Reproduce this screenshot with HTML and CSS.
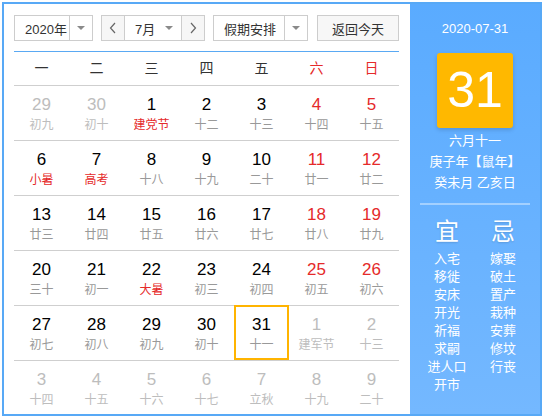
FILE: index.html
```html
<!DOCTYPE html>
<html lang="zh-CN">
<head>
<meta charset="utf-8">
<title>万年历</title>
<link rel="stylesheet" href="styles.css">
</head>
<body>
<div class="cal">
  <div class="main">
    <div class="toolbar">
      <div class="select year">
        <span class="sel-text">2020年</span>
        <span class="sel-arrow"><i class="tri"></i></span>
      </div>
      <div class="month-group">
        <span class="nav-btn"><svg width="8" height="12" viewBox="0 0 8 12"><polyline points="6,1 1.5,6 6,11" fill="none" stroke="#666" stroke-width="1.2"/></svg></span>
        <div class="month-sel">
          <span class="sel-text">7月</span>
          <i class="tri"></i>
        </div>
        <span class="nav-btn"><svg width="8" height="12" viewBox="0 0 8 12"><polyline points="2,1 6.5,6 2,11" fill="none" stroke="#666" stroke-width="1.2"/></svg></span>
      </div>
      <div class="select holiday">
        <span class="sel-text">假期安排</span>
        <span class="sel-arrow"><i class="tri"></i></span>
      </div>
      <button class="today-btn">返回今天</button>
    </div>
    <div class="grid">
      <div class="wk">一</div><div class="wk">二</div><div class="wk">三</div><div class="wk">四</div><div class="wk">五</div><div class="wk red">六</div><div class="wk red">日</div>

      <div class="day other"><b>29</b><s>初九</s></div>
      <div class="day other"><b>30</b><s>初十</s></div>
      <div class="day"><b>1</b><s class="fest">建党节</s></div>
      <div class="day"><b>2</b><s>十二</s></div>
      <div class="day"><b>3</b><s>十三</s></div>
      <div class="day wkend"><b>4</b><s>十四</s></div>
      <div class="day wkend"><b>5</b><s>十五</s></div>

      <div class="day"><b>6</b><s class="fest">小暑</s></div>
      <div class="day"><b>7</b><s class="fest">高考</s></div>
      <div class="day"><b>8</b><s>十八</s></div>
      <div class="day"><b>9</b><s>十九</s></div>
      <div class="day"><b>10</b><s>二十</s></div>
      <div class="day wkend"><b>11</b><s>廿一</s></div>
      <div class="day wkend"><b>12</b><s>廿二</s></div>

      <div class="day"><b>13</b><s>廿三</s></div>
      <div class="day"><b>14</b><s>廿四</s></div>
      <div class="day"><b>15</b><s>廿五</s></div>
      <div class="day"><b>16</b><s>廿六</s></div>
      <div class="day"><b>17</b><s>廿七</s></div>
      <div class="day wkend"><b>18</b><s>廿八</s></div>
      <div class="day wkend"><b>19</b><s>廿九</s></div>

      <div class="day"><b>20</b><s>三十</s></div>
      <div class="day"><b>21</b><s>初一</s></div>
      <div class="day"><b>22</b><s class="fest">大暑</s></div>
      <div class="day"><b>23</b><s>初三</s></div>
      <div class="day"><b>24</b><s>初四</s></div>
      <div class="day wkend"><b>25</b><s>初五</s></div>
      <div class="day wkend"><b>26</b><s>初六</s></div>

      <div class="day"><b>27</b><s>初七</s></div>
      <div class="day"><b>28</b><s>初八</s></div>
      <div class="day"><b>29</b><s>初九</s></div>
      <div class="day"><b>30</b><s>初十</s></div>
      <div class="day selected"><b>31</b><s>十一</s></div>
      <div class="day other"><b>1</b><s>建军节</s></div>
      <div class="day other"><b>2</b><s>十三</s></div>

      <div class="day other"><b>3</b><s>十四</s></div>
      <div class="day other"><b>4</b><s>十五</s></div>
      <div class="day other"><b>5</b><s>十六</s></div>
      <div class="day other"><b>6</b><s>十七</s></div>
      <div class="day other"><b>7</b><s>立秋</s></div>
      <div class="day other"><b>8</b><s>十九</s></div>
      <div class="day other"><b>9</b><s>二十</s></div>
    </div>
  </div>
  <aside class="side">
    <div class="side-date">2020-07-31</div>
    <div class="big-day">31</div>
    <div class="lunar">
      <div>六月十一</div>
      <div>庚子年【鼠年】</div>
      <div>癸未月 乙亥日</div>
    </div>
    <div class="divider"></div>
    <div class="yiji">
      <div class="col">
        <div class="yj-title">宜</div>
        <div>入宅</div><div>移徙</div><div>安床</div><div>开光</div><div>祈福</div><div>求嗣</div><div>进人口</div><div>开市</div>
      </div>
      <div class="col">
        <div class="yj-title">忌</div>
        <div>嫁娶</div><div>破土</div><div>置产</div><div>栽种</div><div>安葬</div><div>修坟</div><div>行丧</div>
      </div>
    </div>
  </aside>
</div>
</body>
</html>
```
FILE: styles.css
```css
* { box-sizing: border-box; }
html, body { margin: 0; padding: 0; background: #fff; }
body {
  font-family: "Liberation Sans", "Noto Sans CJK SC", sans-serif;
  color: #333;
}
.cal {
  margin: 2px;
  width: 540px;
  height: 414px;
  border: 2px solid #58a9f6;
  display: flex;
  overflow: hidden;
}
.main {
  width: 406px;
  padding: 11px 0 0 10px;
  flex: none;
}
.toolbar {
  width: 385px;
  height: 26px;
  display: flex;
  gap: 8px;
  font-size: 13px;
}
.select, .month-group {
  height: 26px;
  border: 1px solid #cdcdcd;
  display: flex;
  align-items: stretch;
  background: #fff;
}
.select.year { width: 79px; }
.select.holiday { width: 95px; }
.sel-text {
  flex: 1;
  display: flex;
  align-items: center;
  padding-left: 10px;
  color: #333;
}
.sel-arrow {
  width: 23px;
  border-left: 1px solid #cdcdcd;
  display: flex;
  align-items: center;
  justify-content: center;
}
.tri {
  display: block;
  width: 0;
  height: 0;
  border-left: 4px solid transparent;
  border-right: 4px solid transparent;
  border-top: 4px solid #8a8a8a;
}
.month-group { width: 104px; }
.nav-btn {
  width: 22px;
  background: #f6f6f6;
  display: flex;
  align-items: center;
  justify-content: center;
}
.month-sel {
  flex: 1;
  border-left: 1px solid #cdcdcd;
  border-right: 1px solid #cdcdcd;
  display: flex;
  align-items: center;
  padding-right: 8px;
}
.today-btn {
  margin-left: auto;
  width: 82px;
  height: 26px;
  border: 1px solid #cdcdcd;
  background: #f7f7f7;
  font: inherit;
  font-size: 13px;
  color: #333;
  padding: 0;
}
.grid {
  margin-top: 10px;
  width: 385px;
  border-top: 1px solid #5aa9f3;
  display: grid;
  grid-template-columns: repeat(7, 55px);
}
.wk {
  height: 33px;
  line-height: 33px;
  text-align: center;
  font-size: 14px;
  color: #333;
}
.wk.red { color: #e52a2a; }
.day {
  height: 55px;
  border-top: 1px solid #cfcfcf;
  padding-top: 8px;
  text-align: center;
}
.day b {
  display: block;
  font-weight: normal;
  font-size: 17px;
  line-height: 22px;
  color: #000;
}
.day s {
  display: block;
  text-decoration: none;
  font-size: 12px;
  line-height: 18px;
  color: #999;
}
.day s.fest { color: #e52a2a; }
.day.wkend b { color: #e52a2a; }
.day.other b, .day.other s { color: #bdbdbd; }
.day.selected {
  border: 2px solid #ffb400;
  padding-top: 7px;
}
.side {
  flex: 1;
  background: linear-gradient(#5aabff, #74b8ff);
  color: #fff;
  text-align: center;
}
.side-date {
  margin-top: 15px;
  font-size: 13px;
  line-height: 20px;
}
.big-day {
  width: 76px;
  height: 75px;
  margin: 14px auto 0;
  background: #ffb800;
  border-radius: 3px;
  box-shadow: 0 2px 4px rgba(0,0,0,0.15);
  font-size: 50px;
  line-height: 75px;
  color: #fff;
}
.lunar {
  margin-top: 2px;
  font-size: 13px;
  line-height: 21px;
}
.divider {
  margin: 10px 10px 0;
  height: 2px;
  background: rgba(255,255,255,0.4);
}
.yiji {
  display: grid;
  grid-template-columns: 56px 56px;
  justify-content: center;
  font-size: 13px;
  line-height: 18px;
  margin-top: 12px;
}
.yj-title {
  font-size: 24px;
  line-height: 30px;
  margin-bottom: 3px;
  text-shadow: 0 1px 2px rgba(0,0,0,0.15);
}
```
